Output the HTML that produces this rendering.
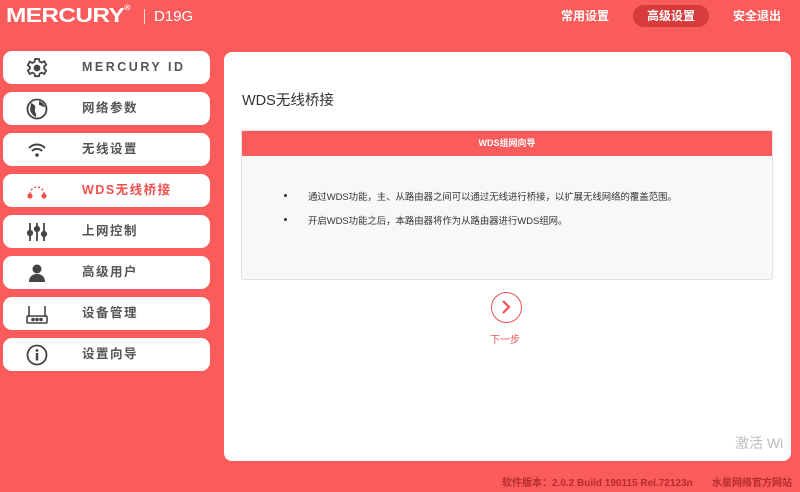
<!DOCTYPE html>
<html><head><meta charset="utf-8"><style>
*{margin:0;padding:0;box-sizing:border-box}
body{width:800px;height:492px;background:#fa5b5b;font-family:"Liberation Sans","Noto Sans CJK SC",sans-serif;position:relative;overflow:hidden}
.logo{position:absolute;left:6px;top:5px;color:#fff;font-weight:bold;font-size:20px;font-family:"Liberation Sans",sans-serif;transform:scaleX(1.22);transform-origin:left top;letter-spacing:-0.5px}
.sep{position:absolute;left:144px;top:9px;width:1px;height:15px;background:#fdd}
.model{position:absolute;left:154px;top:8px;color:#fff;font-size:15px}
.nav{position:absolute;top:5px;height:22px;line-height:22px;color:#fff;font-size:12px;font-weight:bold}
.nav.act{background:#d63c3c;border-radius:11px;padding:0 14px}
.item{position:absolute;left:3px;width:207px;height:33px;background:#fff;border-radius:9px;color:#555;font-size:12.5px;font-weight:bold;letter-spacing:1.5px;line-height:33px}
.item span{position:absolute;left:79px}
.item svg{position:absolute;left:23px;top:6px}
.item.sel{color:#f05050}
.main{position:absolute;left:224px;top:52px;width:567px;height:409px;background:#fff;border-radius:8px}
h1{position:absolute;left:18px;top:37px;font-size:14.5px;font-weight:normal;color:#333}
.box{position:absolute;left:17px;top:78px;width:532px;height:150px;background:#f8f8f8;border:1px solid #e2e2e2;border-radius:3px}
.bh{height:25px;background:#fa5b5b;color:#fff;font-size:9px;font-weight:bold;text-align:center;line-height:25px}
.li{position:absolute;left:44px;font-size:9.4px;color:#333}
.li b{position:absolute;left:-2px;top:5px;width:3px;height:3px;background:#333;border-radius:50%}
.li span{position:absolute;left:22px;white-space:nowrap}
.nxt{position:absolute;left:267px;top:240px;width:31px;height:31px;border:1.5px solid #ef5050;border-radius:50%}
.nt{position:absolute;left:266px;top:279px;font-size:10px;color:#ef5050}
.foot{position:absolute;top:474px;font-size:10px;color:#b82c2c;font-weight:bold}
.wm{position:absolute;left:735px;top:433px;font-size:14px;color:#bbb}
</style></head><body>
<div class="logo">MERCURY<span style="font-size:7px;vertical-align:top">®</span></div>
<div class="sep"></div>
<div class="model">D19G</div>
<div class="nav" style="left:561px">常用设置</div>
<div class="nav act" style="left:633px">高级设置</div>
<div class="nav" style="left:733px">安全退出</div>

<div class="item" style="top:51px"><svg width="22" height="22" viewBox="0 0 22 22" fill="none" stroke="#444" stroke-width="1.8"><path d="M9 2h4l.6 2.6 2.2 1 2.4-1.4 2 3.5-2 1.7v2.4l2 1.7-2 3.5-2.4-1.4-2.2 1-.6 2.6H9l-.6-2.6-2.2-1-2.4 1.4-2-3.5 2-1.7V9.8l-2-1.7 2-3.5 2.4 1.4 2.2-1z"/><circle cx="11" cy="11" r="2.5" fill="#444"/></svg><span style="letter-spacing:2.5px">MERCURY ID</span></div>
<div class="item" style="top:92px"><svg width="22" height="22" viewBox="0 0 22 22"><circle cx="11" cy="11" r="9.5" fill="none" stroke="#444" stroke-width="1.8"/><path d="M5 5c3 1 5 3 4 6s2 4 1 8c-3-1-5-4-6-7zM13 3c3 1 5 3 6 6-3 0-4-2-6-2z" fill="#444"/></svg><span>网络参数</span></div>
<div class="item" style="top:133px"><svg width="22" height="22" viewBox="0 0 22 22" fill="none" stroke="#444" stroke-width="2"><path d="M3 9a11 11 0 0 1 16 0M6 12a7 7 0 0 1 10 0"/><circle cx="11" cy="16" r="1.8" fill="#444" stroke="none"/></svg><span>无线设置</span></div>
<div class="item sel" style="top:174px"><svg width="22" height="22" viewBox="0 0 22 22"><path d="M4 14a7 7 0 0 1 14 0" fill="none" stroke="#f05050" stroke-width="1.5" stroke-dasharray="2 2"/><circle cx="4" cy="16" r="2.6" fill="#f05050"/><circle cx="18" cy="16" r="2.6" fill="#f05050"/></svg><span>WDS无线桥接</span></div>
<div class="item" style="top:215px"><svg width="22" height="22" viewBox="0 0 22 22" stroke="#444" stroke-width="1.8" fill="#444"><path d="M4 2v18M11 2v18M18 2v18"/><circle cx="4" cy="12" r="2.2"/><circle cx="11" cy="8" r="2.2"/><circle cx="18" cy="13" r="2.2"/></svg><span>上网控制</span></div>
<div class="item" style="top:256px"><svg width="22" height="22" viewBox="0 0 22 22" fill="#444"><circle cx="11" cy="7" r="4.5"/><path d="M3 20c0-5 3-8 8-8s8 3 8 8z"/></svg><span>高级用户</span></div>
<div class="item" style="top:297px"><svg width="22" height="22" viewBox="0 0 22 22" fill="none" stroke="#444" stroke-width="1.6"><path d="M3 3v11M19 3v11"/><rect x="1" y="13" width="20" height="7" rx="1"/><circle cx="7" cy="16.5" r="1" fill="#444"/><circle cx="11" cy="16.5" r="1" fill="#444"/><circle cx="15" cy="16.5" r="1" fill="#444"/></svg><span>设备管理</span></div>
<div class="item" style="top:338px"><svg width="22" height="22" viewBox="0 0 22 22"><circle cx="11" cy="11" r="9.5" fill="none" stroke="#444" stroke-width="1.8"/><circle cx="11" cy="6.5" r="1.4" fill="#444"/><rect x="9.8" y="9" width="2.4" height="7.5" fill="#444"/></svg><span>设置向导</span></div>

<div class="main">
<h1>WDS无线桥接</h1>
<div class="box"><div class="bh">WDS组网向导</div>
<div class="li" style="top:58px"><b></b><span>通过WDS功能，主、从路由器之间可以通过无线进行桥接，以扩展无线网络的覆盖范围。</span></div>
<div class="li" style="top:82px"><b></b><span>开启WDS功能之后，本路由器将作为从路由器进行WDS组网。</span></div>
</div>
<div class="nxt"><svg width="28" height="28" viewBox="0 0 28 28"><path d="M11 8l6 6-6 6" fill="none" stroke="#ef5050" stroke-width="2.2"/></svg></div>
<div class="nt">下一步</div>
</div>
<div class="wm">激活 Wi</div>
<div class="foot" style="left:502px">软件版本：2.0.2 Build 190115 Rel.72123n</div>
<div class="foot" style="left:712px">水星网络官方网站</div>
</body></html>
